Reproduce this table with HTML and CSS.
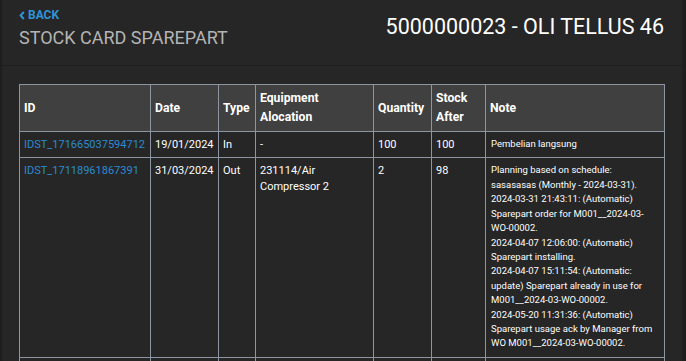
FILE: index.html
```html
<!DOCTYPE html>
<html>
<head>
<meta charset="utf-8">
<link rel="stylesheet" href="styles.css">
</head>
<body>
<div class="panel">
  <header class="page-head">
    <div class="head-left">
      <a class="back" href="#"><svg class="chev" width="6" height="9" viewBox="0 0 6 9"><path d="M4.8 1 L1.6 4.5 L4.8 8" fill="none" stroke="currentColor" stroke-width="2"/></svg>BACK</a>
      <h1 class="title">STOCK CARD SPAREPART</h1>
    </div>
    <h2 class="item">5000000023 - OLI TELLUS 46</h2>
  </header>
  <div class="content">
    <table class="stock">
      <colgroup>
        <col class="c-id"><col class="c-date"><col class="c-type"><col class="c-eq"><col class="c-qty"><col class="c-stock"><col class="c-note">
      </colgroup>
      <thead>
        <tr><th>ID</th><th>Date</th><th>Type</th><th>Equipment Alocation</th><th>Quantity</th><th>Stock After</th><th>Note</th></tr>
      </thead>
      <tbody>
        <tr>
          <td><a href="#" class="link">IDST_171665037594712</a></td>
          <td>19/01/2024</td><td>In</td><td>-</td><td>100</td><td>100</td>
          <td class="note">Pembelian langsung</td>
        </tr>
        <tr>
          <td><a href="#" class="link">IDST_17118961867391</a></td>
          <td>31/03/2024</td><td>Out</td><td>231114/Air Compressor 2</td><td>2</td><td>98</td>
          <td class="note">Planning based on schedule:<br>sasasasas (Monthly - 2024-03-31).<br>2024-03-31 21:43:11: (Automatic) Sparepart order for M001__2024-03-WO-00002.<br>2024-04-07 12:06:00: (Automatic) Sparepart installing.<br>2024-04-07 15:11:54: (Automatic: update) Sparepart already in use for M001__2024-03-WO-00002.<br>2024-05-20 11:31:36: (Automatic) Sparepart usage ack by Manager from WO M001__2024-03-WO-00002.</td>
        </tr>
        <tr class="spacer"><td></td><td></td><td></td><td></td><td></td><td></td><td></td></tr>
      </tbody>
    </table>
  </div>
</div>
</body>
</html>
```
FILE: styles.css
```css
html, body {
  margin: 0;
  padding: 0;
  height: 100%;
  overflow: hidden;
}
body {
  background: #1e1e1e;
  font-family: Roboto, "Liberation Sans", sans-serif;
  color: #ffffff;
}
.panel {
  width: 680px;
  margin-left: 2px;
  height: 100%;
  background: #262626;
}
.page-head {
  height: 65px;
  border-bottom: 1px solid #1f1f1f;
  display: flex;
  justify-content: space-between;
  align-items: flex-start;
  padding: 0 18px 0 17px;
}
.head-left {
  display: flex;
  flex-direction: column;
  padding-top: 9px;
}
.back {
  color: #2f93d8;
  font-weight: 700;
  font-size: 12px;
  line-height: 13px;
  text-decoration: none;
  display: flex;
  align-items: center;
  gap: 3px;
}
.chev { display: block; }
.title {
  margin: 5px 0 0;
  font-size: 18px;
  line-height: 22px;
  font-weight: 400;
  color: #b4b4b4;
}
.item {
  margin: 13px 0 0;
  font-size: 21.5px;
  line-height: 28px;
  font-weight: 400;
  color: #ffffff;
}
.content {
  padding: 18px 18px 0 17px;
}
.stock {
  width: 645px;
  table-layout: fixed;
  border-collapse: collapse;
  border: 1px solid #8d96a0;
}
.c-id { width: 131px; }
.c-date { width: 68px; }
.c-type { width: 37px; }
.c-eq { width: 118px; }
.c-qty { width: 58px; }
.c-stock { width: 54px; }
.c-note { width: 179px; }
.stock th, .stock td {
  border: 1px solid #8d96a0;
  text-align: left;
  padding: 4px 4px;
}
.stock th {
  background: #404040;
  font-size: 12.2px;
  line-height: 19px;
  font-weight: 700;
  vertical-align: middle;
  padding: 4px 4px 4px 4px;
}
.stock td {
  font-size: 11px;
  line-height: 16px;
  vertical-align: top;
  padding: 5px 4px 4px;
}
.stock td.note {
  font-size: 9.5px;
  line-height: 14.42px;
  padding: 5px 4px 6px 5px;
}
.link {
  color: #2d8ad0;
  text-decoration: none;
}
.spacer td { height: 10px; padding: 0; }
```
